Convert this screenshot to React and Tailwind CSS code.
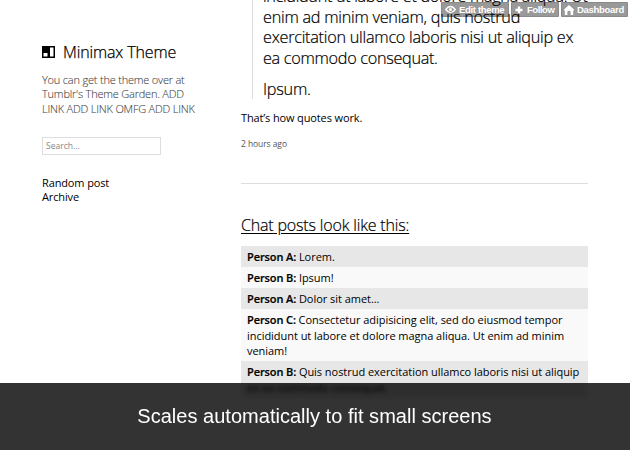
function Eye() {
  return (
    <svg viewBox="0 0 11 9" className="h-[9px] w-[11px] shrink-0">
      <path d="M0.7 4.5Q5.5 -1.5 10.3 4.5Q5.5 10.5 0.7 4.5Z" fill="none" stroke="#fff" strokeWidth="1.4" />
      <circle cx="5.5" cy="4.5" r="1.5" fill="#fff" />
    </svg>
  );
}

function Plus() {
  return (
    <svg viewBox="0 0 8 8" className="h-2 w-2 shrink-0">
      <path d="M4 0.5V7.5M0.5 4H7.5" stroke="#fff" strokeWidth="2.4" />
    </svg>
  );
}

function Home() {
  return (
    <svg viewBox="0 0 10 10" className="h-2.5 w-2.5 shrink-0">
      <path d="M5 0L10 4.5V5.5H9.2V10H6.6V6.6Q5 5 3.4 6.6V10H0.8V5.5H0V4.5Z" fill="#fff" />
    </svg>
  );
}

function Control({ icon, children, size }) {
  return (
    <div className={`flex h-[15px] items-center rounded-[1px] border border-black/10 bg-black/40 whitespace-nowrap text-white font-['Liberation_Sans',Arial,sans-serif] text-[9.5px] leading-none font-bold ${size}`}>
      {icon}
      <span>{children}</span>
    </div>
  );
}

function ChatRow({ name, lines, tone }) {
  return (
    <div className={`px-1.5 pt-[3.1px] pb-[2.05px] text-[11px] leading-[15.85px] tracking-[-0.04px] whitespace-nowrap ${tone}`}>
      {lines.map((line, i) => (
        <div key={line}>
          {i === 0 && <b className="font-semibold tracking-[-0.1px] [-webkit-text-stroke:0.2px_#000]">{name}: </b>}
          {line}
        </div>
      ))}
    </div>
  );
}

export default function App() {
  return (
    <div className="relative h-[450px] w-[630px] overflow-hidden bg-white font-['Open_Sans',sans-serif] text-black">
      <div className="flex">
        <aside className="w-[200px] shrink-0 pt-10 pl-[42px] whitespace-nowrap">
          <div className="flex h-6 items-center gap-2">
            <svg viewBox="0 0 13 12" className="h-3 w-[13px]">
              <path d="M0 0H13V12H0Z" fill="#000" />
              <path d="M8 1.5H11.5V10.5H8ZM1.5 7H5.5V10.5H1.5Z" fill="#fff" />
            </svg>
            <h1 className="text-[16px] leading-6 font-light tracking-[-0.13px] [-webkit-text-stroke:0.25px_#000]">Minimax Theme</h1>
          </div>
          <div className="mt-[9px] text-[11px] leading-[14.4px] font-light tracking-[-0.2px] text-[#444] [-webkit-text-stroke:0.1px_#444]">
            <p>You can get the theme over at</p>
            <p>Tumblr's Theme Garden. ADD</p>
            <p>LINK ADD LINK OMFG ADD LINK</p>
          </div>
          <div className="mt-[20.8px] flex h-[18px] w-[119px] items-center border border-[#ddd] pl-[3px] text-[8.5px] text-[#888]">Search...</div>
          <nav className="mt-[21px] text-[11px] leading-[14px] tracking-[-0.13px]">
            <p>Random post</p>
            <p>Archive</p>
          </nav>
        </aside>
        <main className="ml-[41px] w-[347px] shrink-0">
          <blockquote className="-mt-[13.6px] ml-[11px] border-l border-[#ddd] pl-[10px] text-[16.25px] leading-[20.4px] font-light tracking-[-0.26px] whitespace-nowrap [-webkit-text-stroke:0.2px_#000]">
            <p className="tracking-[-0.33px]">incididunt ut labore et dolore magna aliqua. Ut</p>
            <p>enim ad minim veniam, quis nostrud</p>
            <p>exercitation ullamco laboris nisi ut aliquip ex</p>
            <p className="tracking-[-0.31px]">ea commodo consequat.</p>
            <p className="mt-[10.6px]">Ipsum.</p>
          </blockquote>
          <p className="mt-[10.6px] text-[11px] leading-4 tracking-[-0.13px]">That’s how quotes work.</p>
          <p className="mt-3 text-[8.5px] leading-3 tracking-[-0.08px] text-[#555]">2 hours ago</p>
          <hr className="mt-[33px] border-[#ddd]" />
          <h2 className="mt-[30px] text-[16px] leading-[22px] font-light tracking-[-0.17px] underline underline-offset-2 [-webkit-text-stroke:0.2px_#000]">Chat posts look like this:</h2>
          <div className="mt-[10px]">
            <ChatRow name="Person A" lines={["Lorem."]} tone="bg-[#e7e7e7]" />
            <ChatRow name="Person B" lines={["Ipsum!"]} tone="bg-[#f9f9f9]" />
            <ChatRow name="Person A" lines={["Dolor sit amet..."]} tone="bg-[#e7e7e7]" />
            <ChatRow name="Person C" lines={["Consectetur adipisicing elit, sed do eiusmod tempor", "incididunt ut labore et dolore magna aliqua. Ut enim ad minim", "veniam!"]} tone="bg-[#f9f9f9]" />
            <ChatRow name="Person B" lines={["Quis nostrud exercitation ullamco laboris nisi ut aliquip", "ex ea commodo consequat."]} tone="bg-[#e7e7e7]" />
          </div>
        </main>
      </div>
      <div className="absolute top-[2px] right-[2px] flex gap-[2px]">
        <Control icon={<Eye />} size="w-[68px] gap-[3px] pl-[3px] tracking-[-0.33px]">Edit theme</Control>
        <Control icon={<Plus />} size="w-[48px] gap-1 pl-[3px] tracking-[-0.45px]">Follow</Control>
        <Control icon={<Home />} size="w-[67px] gap-[3px] pl-[2px] tracking-[-0.3px]">Dashboard</Control>
      </div>
      <div className="absolute inset-x-0 bottom-0 flex h-[67px] items-center justify-center bg-black/80 pb-[2px] font-['Liberation_Sans',Arial,sans-serif] text-[20px] leading-6 tracking-[0.02px] whitespace-nowrap text-white backdrop-blur-[2px]">
        <span className="-ml-[1px]">Scales automatically to fit small screens</span>
      </div>
    </div>
  );
}
